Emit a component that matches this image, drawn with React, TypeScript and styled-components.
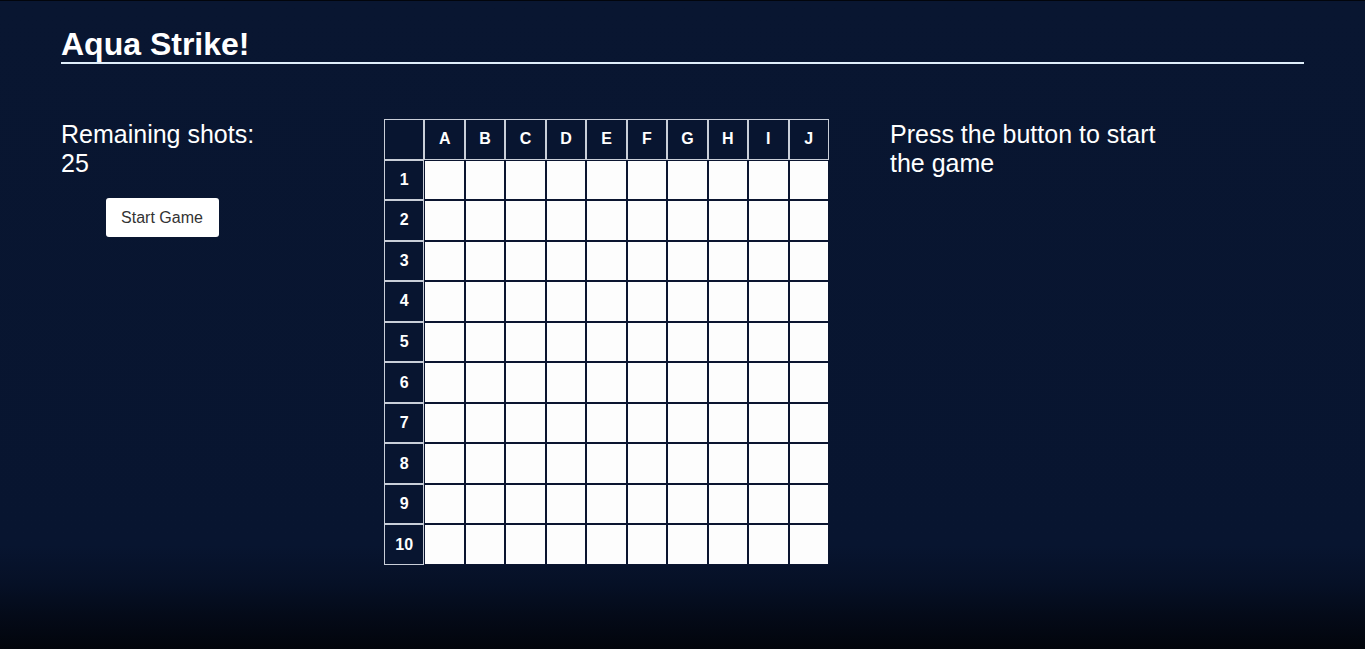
import React from "react";
import styled, { createGlobalStyle } from "styled-components";

const GlobalStyle = createGlobalStyle`
  html, body {
    margin: 0;
    padding: 0;
    height: 100%;
  }
  body {
    font-family: "Liberation Sans", Arial, sans-serif;
    background: #081530;
  }
  #root {
    min-height: 100vh;
  }
`;

const Page = styled.div`
  min-height: 649px;
  box-sizing: border-box;
  border-top: 1px solid #02050c;
  padding: 0 61px;
  background: linear-gradient(
    to bottom,
    #091631 0%,
    #081530 84%,
    #061026 90%,
    #040a18 95%,
    #02050c 100%
  );
  color: #ffffff;
`;

const Title = styled.h1`
  margin: 25px 0 0;
  font-size: 32px;
  font-weight: 700;
  line-height: 36px;
  color: #ffffff;
  border-bottom: 2px solid #dfeefa;
`;

const Main = styled.div`
  display: flex;
  align-items: flex-start;
  margin-top: 55px;
`;

const LeftColumn = styled.div`
  width: 202px;
  margin-right: 121px;
  padding-top: 1px;
  display: flex;
  flex-direction: column;
`;

const InfoText = styled.div`
  font-size: 25px;
  line-height: 29px;
  color: #ffffff;
`;

const StartButton = styled.button`
  align-self: center;
  margin-top: 20px;
  width: 113px;
  height: 39px;
  border: none;
  border-radius: 3px;
  background: #ffffff;
  color: #333333;
  font-family: "Liberation Sans", Arial, sans-serif;
  font-size: 16px;
  cursor: pointer;
`;

const Board = styled.div`
  display: grid;
  grid-template-columns: repeat(11, 1fr);
  grid-template-rows: repeat(11, 1fr);
  width: 445px;
  height: 446px;
  flex-shrink: 0;
`;

const HeaderCell = styled.div`
  box-sizing: border-box;
  border: 1px solid #c9ced8;
  background: #081530;
  color: #ffffff;
  font-weight: 700;
  font-size: 16px;
  display: flex;
  align-items: center;
  justify-content: center;
`;

const WaterCell = styled.div`
  box-sizing: border-box;
  border: 1px solid #0b1530;
  background: #fdfdfd;
`;

const RightColumn = styled.div`
  width: 295px;
  margin-left: 61px;
  padding-top: 1px;
`;

const letters = ["A", "B", "C", "D", "E", "F", "G", "H", "I", "J"];
const rows = Array.from({ length: 10 }, (_, i) => i + 1);

export default function App() {
  return (
    <>
      <GlobalStyle />
      <Page>
        <Title>Aqua Strike!</Title>
        <Main>
          <LeftColumn>
            <InfoText>
              Remaining shots:
              <br />
              25
            </InfoText>
            <StartButton>Start Game</StartButton>
          </LeftColumn>
          <Board>
            <HeaderCell />
            {letters.map((l) => (
              <HeaderCell key={l}>{l}</HeaderCell>
            ))}
            {rows.map((r) => (
              <React.Fragment key={r}>
                <HeaderCell>{r}</HeaderCell>
                {letters.map((l) => (
                  <WaterCell key={`${l}${r}`} />
                ))}
              </React.Fragment>
            ))}
          </Board>
          <RightColumn>
            <InfoText>Press the button to start the game</InfoText>
          </RightColumn>
        </Main>
      </Page>
    </>
  );
}
